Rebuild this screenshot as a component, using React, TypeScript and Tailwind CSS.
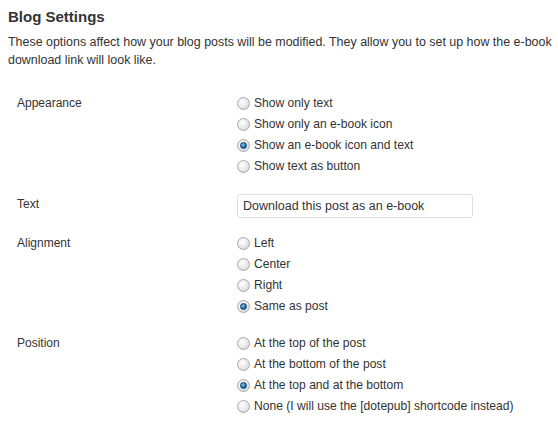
import React from 'react';

type Option = { label: string; checked?: boolean };

const sections: { title: string; options?: Option[]; input?: string }[] = [
  {
    title: 'Appearance',
    options: [
      { label: 'Show only text' },
      { label: 'Show only an e-book icon' },
      { label: 'Show an e-book icon and text', checked: true },
      { label: 'Show text as button' },
    ],
  },
  { title: 'Text', input: 'Download this post as an e-book' },
  {
    title: 'Alignment',
    options: [
      { label: 'Left' },
      { label: 'Center' },
      { label: 'Right' },
      { label: 'Same as post', checked: true },
    ],
  },
  {
    title: 'Position',
    options: [
      { label: 'At the top of the post' },
      { label: 'At the bottom of the post' },
      { label: 'At the top and at the bottom', checked: true },
      { label: 'None (I will use the [dotepub] shortcode instead)' },
    ],
  },
];

function Radio({ checked }: { checked?: boolean }) {
  return (
    <span className="flex h-[13px] w-[13px] shrink-0 items-center justify-center rounded-full border border-[#a9a9a9] bg-[radial-gradient(circle_at_40%_35%,#ffffff_0%,#ececec_45%,#cfcfcf_100%)]">
      {checked ? (
        <span className="h-[7px] w-[7px] rounded-full border border-[#0f3d66] bg-[radial-gradient(circle_at_40%_35%,#7fc4f5_0%,#1a6fb5_60%,#0c4a85_100%)]" />
      ) : null}
    </span>
  );
}

export default function App() {
  return (
    <div className="min-h-[425px] overflow-hidden bg-white px-2 pt-[7px] font-['Liberation_Sans',Arial,sans-serif] text-[12px] text-[#333]">
      <h3 className="text-[15px] font-bold leading-[20px] text-[#333]">Blog Settings</h3>
      <p className="mt-[6px] whitespace-nowrap text-[12.45px] leading-[18px]">
        These options affect how your blog posts will be modified. They allow you to set up how the e-book
        <br />
        download link will look like.
      </p>
      <div className="mt-[16px]">
        {sections.map((s) => (
          <div key={s.title} className={s.input ? 'flex pt-[9px] pb-[7px]' : 'flex py-2'}>
            <div className="w-[229px] pl-[9px] leading-[20px]">{s.title}</div>
            {s.input ? (
              <input
                readOnly
                value={s.input}
                className="h-[24px] w-[236px] rounded-[3px] border border-[#dfdfdf] px-[5px] text-[12.5px] text-[#333] outline-none"
              />
            ) : (
              <div className="flex flex-col">
                {s.options?.map((o) => (
                  <label key={o.label} className="flex h-[21px] items-center gap-[4px] text-[12.1px]">
                    <Radio checked={o.checked} />
                    <span>{o.label}</span>
                  </label>
                ))}
              </div>
            )}
          </div>
        ))}
      </div>
    </div>
  );
}
